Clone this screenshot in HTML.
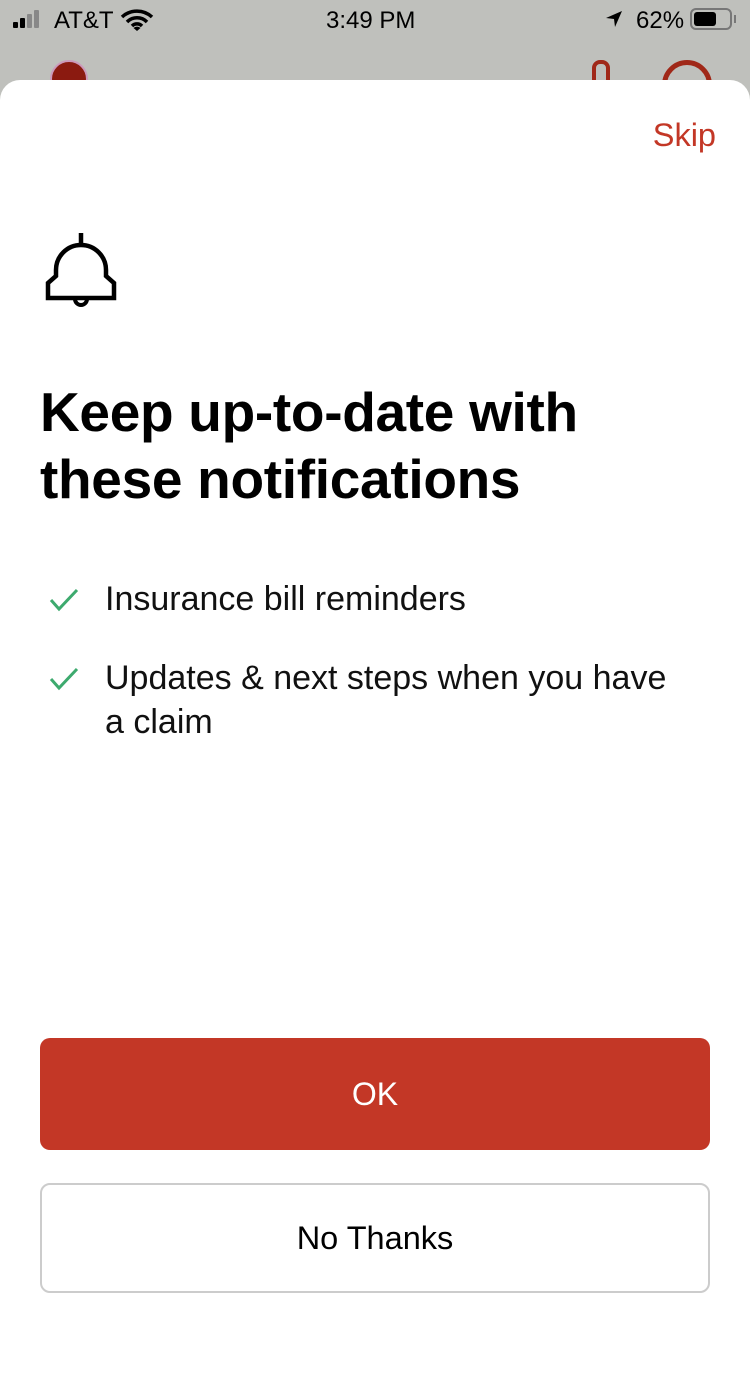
<!DOCTYPE html>
<html><head><style>
body{margin:0;width:750px;height:1334px;background:#bfc0bc;font-family:"Liberation Sans",sans-serif;position:relative;overflow:hidden}
.sb{position:absolute;top:0;left:0;width:750px;height:40px;font-size:24px;color:#000}
.sheet{position:absolute;top:80px;left:0;width:750px;height:1300px;background:#fff;border-radius:20px 20px 0 0}
.abs{position:absolute}
</style></head><body>
<div class="sb">
 <div class="abs" style="left:13px;top:22px;width:5px;height:6px;background:#000;border-radius:1px"></div>
 <div class="abs" style="left:20px;top:18px;width:5px;height:10px;background:#000;border-radius:1px"></div>
 <div class="abs" style="left:27px;top:14px;width:5px;height:14px;background:#888;border-radius:1px"></div>
 <div class="abs" style="left:34px;top:10px;width:5px;height:18px;background:#888;border-radius:1px"></div>
 <div class="abs" style="left:54px;top:7px">AT&amp;T</div>
 <svg class="abs" style="left:120px;top:9px" width="34" height="22" viewBox="0 0 34 22"><path d="M2 8a22 22 0 0 1 30 0M7 13a14 14 0 0 1 20 0M12 17a7 7 0 0 1 10 0" stroke="#000" stroke-width="3.5" fill="none"/><path d="M13.5 19l3.5 3 3.5-3a5 5 0 0 0-7 0z"/></svg>
 <div class="abs" style="left:326px;top:7px">3:49 PM</div>
 <svg class="abs" style="left:605px;top:10px" width="18" height="18" viewBox="0 0 18 18"><path d="M17 1L1 8l8 1 1 8z"/></svg>
 <div class="abs" style="left:636px;top:7px">62%</div>
 <div class="abs" style="left:690px;top:8px;width:42px;height:22px;border:2px solid #777;border-radius:6px;box-sizing:border-box"></div>
 <div class="abs" style="left:694px;top:12px;width:22px;height:14px;background:#000;border-radius:3px"></div>
 <div class="abs" style="left:734px;top:15px;width:2px;height:8px;background:#777"></div>
</div>
<div class="abs" style="left:50px;top:60px;width:34px;height:34px;border-radius:50%;background:#8b1a10;border:2px solid #c9b"></div>
<div class="abs" style="left:592px;top:60px;width:10px;height:40px;border:4px solid #a02818;border-radius:8px"></div>
<div class="abs" style="left:662px;top:60px;width:40px;height:40px;border:5px solid #a02818;border-radius:50%"></div>
<div class="sheet">
 <div class="abs" style="right:34px;top:37px;font-size:32.5px;color:#c33726">Skip</div>
 <svg class="abs" style="left:40px;top:150px" width="84" height="84" viewBox="40 230 84 84">
  <path d="M81 233v12M56 276v-6a25 25 0 0 1 50 0v6l8 7v15H48v-15z" stroke="#000" stroke-width="4.5" fill="none" stroke-linejoin="miter"/>
  <path d="M75 299a6 6 0 0 0 12 0" stroke="#000" stroke-width="4" fill="none"/>
 </svg>
 <div class="abs" style="left:40px;top:299px;font-size:55px;font-weight:bold;line-height:67px;color:#000;letter-spacing:-0.3px">Keep up-to-date with<br>these notifications</div>
 <svg class="abs" style="left:49px;top:508px" width="30" height="24" viewBox="0 0 30 24"><path d="M2 12l8 9L28 2" stroke="#3daa6e" stroke-width="3" fill="none"/></svg>
 <div class="abs" style="left:105px;top:500px;font-size:34px;color:#111">Insurance bill reminders</div>
 <svg class="abs" style="left:49px;top:587px" width="30" height="24" viewBox="0 0 30 24"><path d="M2 12l8 9L28 2" stroke="#3daa6e" stroke-width="3" fill="none"/></svg>
 <div class="abs" style="left:105px;top:576px;font-size:34px;line-height:44px;color:#111">Updates &amp; next steps when you have<br>a claim</div>
 <div class="abs" style="left:40px;top:958px;width:670px;height:112px;background:#c33726;border-radius:10px;color:#fff;font-size:32px;text-align:center;line-height:112px">OK</div>
 <div class="abs" style="left:40px;top:1103px;width:670px;height:110px;box-sizing:border-box;border:2px solid #ccc;border-radius:10px;color:#000;font-size:32.5px;text-align:center;line-height:106px">No Thanks</div>
</div>
</body></html>
